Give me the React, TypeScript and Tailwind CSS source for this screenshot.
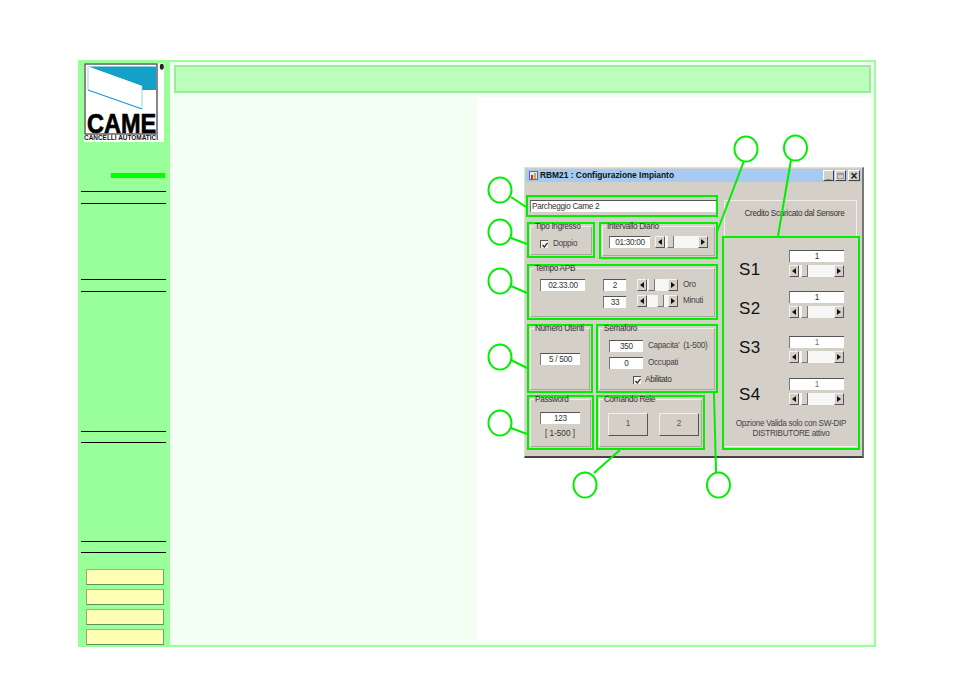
import React from "react";

const FONT = "[font-family:'Liberation_Sans',Arial,sans-serif]";

function Arrow({ dir }: { dir: "l" | "r" }) {
  return (
    <svg width="4" height="6" viewBox="0 0 4 6" className="block">
      <polygon points={dir === "l" ? "4,0 4,6 0,3" : "0,0 0,6 4,3"} fill="#111" />
    </svg>
  );
}

function ArrowBtn({ dir }: { dir: "l" | "r" }) {
  return (
    <div className="w-[10px] shrink-0 h-full flex items-center justify-center bg-[#d4d0c8] border-t border-l border-t-[#f4f3ef] border-l-[#f4f3ef] border-b border-r border-b-[#555] border-r-[#555]">
      <Arrow dir={dir} />
    </div>
  );
}

function Scroll({ w, thumb, h = "h-[12px]" }: { w: string; thumb: string; h?: string }) {
  return (
    <div className={`flex ${w} ${h} bg-[#f6f6f4]`}>
      <ArrowBtn dir="l" />
      <div className="flex-1 flex min-w-0">
        <div className={`${thumb} w-[7px] h-full bg-[#d4d0c8] border-r border-b border-r-[#777] border-b-[#777] border-l border-l-[#f4f3ef]`} />
      </div>
      <ArrowBtn dir="r" />
    </div>
  );
}

function Input({ w, children, h = "h-[12px]", align = "text-center" }: { w: string; children?: React.ReactNode; h?: string; align?: string }) {
  return (
    <div className={`${w} ${h} ${align} shrink-0 bg-white border-t border-l border-t-[#555] border-l-[#777] text-[8.2px] tracking-[-0.3px] leading-[11px] text-[#333]`}>
      {children}
    </div>
  );
}

function Check({ checked = true }: { checked?: boolean }) {
  return (
    <div className="w-[8px] h-[8px] bg-[#f4f4f2] border-t border-l border-t-[#555] border-l-[#555] flex items-center justify-center shrink-0">
      {checked && (
        <svg width="6" height="6" viewBox="0 0 6 6" className="block">
          <path d="M0.5 3 L2.3 5 L5.5 0.8" stroke="#222" strokeWidth="1.2" fill="none" />
        </svg>
      )}
    </div>
  );
}

function Group({ box, legend, children }: { box: string; legend: string; children?: React.ReactNode }) {
  return (
    <div className={`${box} border-2 border-[#00ee00] shrink-0 px-[1px] pb-[1px]`}>
      <fieldset className="h-full border border-[#efeeea] border-b-[#a9a79f] border-r-[#a9a79f] min-w-0">
        <legend className="ml-[3px] px-[1px] text-[8.2px] tracking-[-0.3px] leading-[4px] pt-[1px] text-[#333] whitespace-nowrap">{legend}</legend>
        {children}
      </fieldset>
    </div>
  );
}

function SensorRow({ label, cls, labelCls, dim }: { label: string; cls: string; labelCls: string; dim?: boolean }) {
  return (
    <div className={`flex items-start pl-[14px] ${cls}`}>
      <div className={`w-[50px] text-[17px] leading-[16px] text-[#111] tracking-[0.4px] ${labelCls}`}>{label}</div>
      <div className="flex flex-col gap-[3px]">
        <Input w="w-[55px]">
          <span className={dim ? "text-[#777]" : ""}>1</span>
        </Input>
        <Scroll w="w-[55px]" thumb="ml-[2px]" />
      </div>
    </div>
  );
}

function Logo() {
  return (
    <svg width="80" height="79" viewBox="0 0 80 79" className="block">
      <rect x="0" y="0" width="80" height="79" fill="#fff" />
      <rect x="1" y="1" width="72" height="70" fill="#fff" stroke="#555" strokeWidth="1.4" />
      <polygon points="4,3.5 72,3.5 72,27 58,27 58,23" fill="#15a0c8" />
      <polygon points="4,3.5 58,23 58,46 4,27" fill="#fff" />
      <path d="M4 3.5 V27 L58 46 V23" stroke="#7cc8e4" strokeWidth="0.8" fill="none" />
      <path d="M4 27 L58 46" stroke="#159cd0" strokeWidth="1" fill="none" />
      <text transform="translate(3 69.5) scale(0.84 1)" fontFamily="'Liberation Sans',Arial,sans-serif" fontWeight="700" fontSize="28" fill="#000" stroke="#000" strokeWidth="0.7">CAME</text>
      <text x="0" y="77" fontFamily="'Liberation Sans',Arial,sans-serif" fontWeight="700" fontSize="6.5" textLength="74" lengthAdjust="spacingAndGlyphs" fill="#111">CANCELLI AUTOMATICI</text>
      <ellipse cx="77.8" cy="3.8" rx="2" ry="3" fill="#222" />
    </svg>
  );
}

function Rule({ cls }: { cls: string }) {
  return <div className={`h-px bg-black ml-[1px] w-[85px] ${cls}`} />;
}

function NavBtn({ cls }: { cls: string }) {
  return <div className={`h-[16px] w-[78px] ml-[6px] bg-[#ffffb3] border border-t-[#a8b080] border-l-[#a8a070] border-r-[#70a070] border-b-[#609060] ${cls}`} />;
}

export default function App() {
  return (
    <div className={`min-h-screen bg-white pt-[60px] pl-[78px] ${FONT}`}>
      <div className="flex w-[798px] h-[587px] border-2 border-[#99ff99] bg-[#99ff99]">
        {/* Sidebar */}
        <aside className="w-[90px] shrink-0 flex flex-col">
          <div className="ml-[4px] mt-[1px]"><Logo /></div>
          <div className="h-[5px] w-[54px] ml-[31px] mt-[31px] bg-[#00ff00]" />
          <Rule cls="mt-[13px]" />
          <Rule cls="mt-[11px]" />
          <Rule cls="mt-[75px]" />
          <Rule cls="mt-[11px]" />
          <Rule cls="mt-[139px]" />
          <Rule cls="mt-[10px]" />
          <Rule cls="mt-[98px]" />
          <Rule cls="mt-[10px]" />
          <NavBtn cls="mt-[16px]" />
          <NavBtn cls="mt-[4px]" />
          <NavBtn cls="mt-[4px]" />
          <NavBtn cls="mt-[4px]" />
        </aside>

        {/* Main */}
        <main className="flex-1 min-w-0 bg-[#f3fff3] pt-[3px] pl-[4px] pr-[3px] flex flex-col">
          <div className="h-[28px] bg-[#bbffbb] border-2 border-[#99ee99] shrink-0" />
          <div className="flex mt-[4px] h-[543px]">
            <div className="w-[303px] shrink-0" />
            <div className="relative flex-1 min-w-0 bg-white pl-[47px] pt-[70px]">
              {/* Dialog window */}
              <div className="flex flex-col w-[340px] h-[291px] bg-[#d4d0c8] border border-t-[#cfe8cf] border-l-[#cfe8cf] border-r-[#777] border-b-[#444] border-b-2 border-r-2 p-[1px] pb-0 pr-0">
                <div className="h-[13px] mr-[1px] bg-[#a6caf0] flex items-center pl-[3px] shrink-0">
                  <svg width="9" height="9" viewBox="0 0 9 9" className="block shrink-0">
                    <rect x="0.5" y="0.5" width="8" height="8" fill="#e8e4f0" stroke="#6060c0" />
                    <rect x="2" y="4" width="2" height="4" fill="#e02020" />
                    <rect x="5" y="2" width="2" height="6" fill="#d0b020" />
                  </svg>
                  <span className="ml-[2px] text-[8.4px] leading-[13px] font-bold text-[#111] whitespace-nowrap">RBM21 : Configurazione Impianto</span>
                  <div className="ml-auto flex items-center gap-[1px] pr-[1px]">
                    {["_", "", "×"].map((c, i) => (
                      <div key={i} className={`h-[11px] ${i === 2 ? "w-[12px] ml-[1px] text-[12px]" : "w-[11px] text-[9px]"} bg-[#d4d0c8] border-t border-l border-t-white border-l-white border-b border-r border-b-[#444] border-r-[#444] flex items-center justify-center leading-[8px] font-bold text-[#222]`}>
                        {i === 1 ? <div className="w-[7px] h-[6px] border border-[#999] border-t-2" /> : c}
                      </div>
                    ))}
                  </div>
                </div>

                <div className="flex flex-1 min-h-0">
                  {/* Left column */}
                  <div className="w-[192px] shrink-0 pt-[13px] flex flex-col">
                    <div className="h-[22px] border-2 border-[#00ee00] px-[2px] pt-[3px]">
                      <Input w="w-[186px]" h="h-[12px]" align="text-left pl-[1px]">Parcheggio Came 2</Input>
                    </div>
                    <div className="flex mt-[5px] ml-[1px] gap-[4px]">
                      <Group box="w-[68px] h-[36px]" legend="Tipo Ingresso">
                        <div className="flex items-center gap-[5px] pl-[9px] pt-[11px] text-[8.2px] tracking-[-0.3px] leading-[8px] text-[#444]">
                          <Check /><span>Doppio</span>
                        </div>
                      </Group>
                      <Group box="w-[119px] h-[37px]" legend="Intervallo Diario">
                        <div className="flex items-center gap-[5px] pl-[6px] pt-[7px]">
                          <Input w="w-[41px]">01:30:00</Input>
                          <Scroll w="w-[53px]" thumb="ml-[2px]" />
                        </div>
                      </Group>
                    </div>
                    <div className="ml-[1px] mt-[5px]">
                      <Group box="w-[191px] h-[56px]" legend="Tempo APB">
                        <div className="flex pl-[9px] pt-[8px]">
                          <Input w="w-[45px]">02.33.00</Input>
                          <div className="ml-[18px] flex flex-col gap-[5px]">
                            <Input w="w-[23px]" h="h-[12px]">2</Input>
                            <Input w="w-[23px]" h="h-[12px]">33</Input>
                          </div>
                          <div className="ml-[11px] flex flex-col gap-[4px] text-[8.2px] tracking-[-0.3px] leading-[12px] text-[#444]">
                            <div className="flex gap-[5px]"><Scroll w="w-[41px]" thumb="ml-[1px]" /><span>Oro</span></div>
                            <div className="flex gap-[5px]"><Scroll w="w-[41px]" thumb="ml-[10px]" /><span>Minuti</span></div>
                          </div>
                        </div>
                      </Group>
                    </div>
                    <div className="flex ml-[1px] mt-[4px] gap-[3px]">
                      <Group box="w-[66px] h-[69px]" legend="Numero Utenti">
                        <div className="pl-[9px] pt-[22px]"><Input w="w-[40px]">5 / 500</Input></div>
                      </Group>
                      <Group box="w-[122px] h-[69px]" legend="Semaforo">
                        <div className="pl-[9px] pt-[9px] flex flex-col gap-[5px] text-[8.2px] tracking-[-0.3px] leading-[12px] text-[#444]">
                          <div className="flex gap-[5px]"><Input w="w-[34px]">350</Input><span className="whitespace-pre">Capacita'  (1-500)</span></div>
                          <div className="flex gap-[5px]"><Input w="w-[34px]">0</Input><span>Occupati</span></div>
                          <div className="flex items-center gap-[4px] pl-[24px] text-[#333]"><Check /><span>Abilitato</span></div>
                        </div>
                      </Group>
                    </div>
                    <div className="flex ml-[1px] mt-[2px] gap-[2px]">
                      <Group box="w-[67px] h-[55px]" legend="Password">
                        <div className="pl-[9px] pt-[10px] text-[#333]">
                          <Input w="w-[40px]">123</Input>
                          <div className="w-[40px] text-center mt-[5px] text-[8.2px] leading-[10px]">[ 1-500 ]</div>
                        </div>
                      </Group>
                      <Group box="w-[109px] h-[55px]" legend="Comando Rele">
                        <div className="flex gap-[11px] pl-[8px] pt-[11px] text-[8.2px] text-[#555]">
                          {["1", "2"].map((t) => (
                            <div key={t} className="w-[40px] h-[23px] flex items-center justify-center bg-[#d4d0c8] border border-t-[#f0efeb] border-l-[#f0efeb] border-r-[#555] border-b-[#555]">{t}</div>
                          ))}
                        </div>
                      </Group>
                    </div>
                  </div>

                  {/* Right column */}
                  <div className="ml-[4px] w-[138px] shrink-0 pt-[18px] flex flex-col">
                    <div className="h-[36px] w-[133px] ml-[2px] border-t border-l border-r border-[#efeeea] pt-[7px] pl-[8px] text-center text-[8.2px] tracking-[-0.3px] leading-[12px] text-[#333]">
                      Credito Scaricato dal Sensore
                    </div>
                    <div className="h-[214px] border-2 border-[#00ee00] p-[1px] flex flex-col">
                      <div className="flex-1 border-b border-[#f4f3ef] flex flex-col">
                        <SensorRow label="S1" cls="mt-[11px]" labelCls="pt-[12px]" />
                        <SensorRow label="S2" cls="mt-[13px]" labelCls="pt-[10px]" />
                        <SensorRow label="S3" cls="mt-[18px]" labelCls="pt-[4px]" dim />
                        <SensorRow label="S4" cls="mt-[15px]" labelCls="pt-[9px]" dim />
                        <div className="mt-[14px] text-center text-[8.2px] tracking-[-0.3px] leading-[10px] text-[#444]">
                          Opzione Valida solo con SW-DIP<br />DISTRIBUTORE attivo
                        </div>
                      </div>
                    </div>
                  </div>
                </div>
              </div>

              {/* Callouts */}
              <svg viewBox="477 97 394 543" className="absolute left-0 top-0 w-full h-full pointer-events-none" fill="none" stroke="#00ee00" strokeWidth="2">
                {[[500, 190], [500, 232], [500, 281], [500, 357], [500, 423], [585, 485], [718.5, 485], [746, 149], [795.5, 148]].map(([x, y], i) => (
                  <ellipse key={i} cx={x} cy={y} rx="11.5" ry="12.5" />
                ))}
                <path d="M511 197 L526 207" />
                <path d="M511 238 L527 244" />
                <path d="M511 286 L527 293" />
                <path d="M511 360 L527 368" />
                <path d="M511 428 L527 434" />
                <path d="M594 473 L620 450" />
                <path d="M716 472 L714 393" />
                <path d="M744 161 L717 232" />
                <path d="M791 160 L778 236" />
              </svg>
            </div>
          </div>
        </main>
      </div>
    </div>
  );
}
